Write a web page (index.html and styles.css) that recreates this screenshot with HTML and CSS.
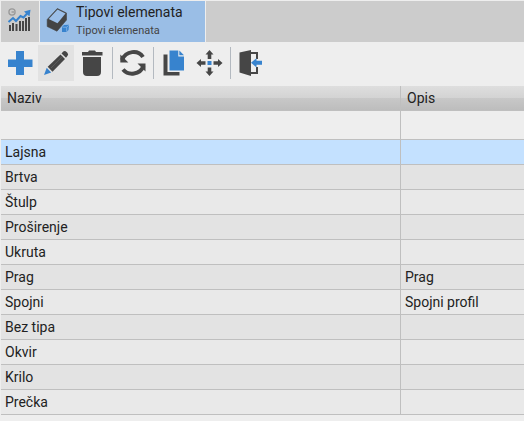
FILE: index.html
```html
<!DOCTYPE html>
<html lang="hr">
<head>
<meta charset="utf-8">
<title>Tipovi elemenata</title>
<link rel="stylesheet" href="styles.css">
</head>
<body>
<main class="window">
  <nav class="tabs">
    <div class="tab tab-home">
      <svg width="38" height="41" viewBox="1 1 38 41">
        <circle cx="12" cy="12" r="3.1" fill="none" stroke="#999" stroke-width="1.3"/>
        <path d="M14 12h-2.500" stroke="#999" stroke-width="1.400"/>
        <path d="M9 25h2v6H9zM12 23h2v8h-2zM15.500 24h2v7h-2zM19 21h2v10h-2zM22 21h2v10h-2zM25 18h2v13h-2zM28 17h2v14h-2z" fill="#464646"/>
        <path d="M8.500 22l4.500-4 3 3 4.500-5 3 1.500 4.500-5" fill="none" stroke="#3783ce" stroke-width="2"/>
        <path d="M24 11.500L30.500 9.700 29.500 16.500z" fill="#3783ce"/>
      </svg>
    </div>
    <div class="tab tab-active">
      <svg width="36" height="41" viewBox="40 1 36 41">
        <path d="M57.300 8.500L66.500 13v7L57 31.200l-9.800-4.700v-7z" fill="#444" stroke="#444" stroke-width=".6" stroke-linejoin="round"/>
        <path d="M57.500 9.500l8 4-8 9.800-8.800-4.300z" fill="#9bbfe9"/>
        <path d="M64 25l5-.3-.5 5.300-2 2H62v-5z" fill="#3783ce"/>
        <path d="M62.500 27.200h4.200v4.500M66.700 27.200l2-2" fill="none" stroke="#8bb6e5" stroke-width=".8"/>
      </svg>
      <div class="tab-text"><div class="title">Tipovi elemenata</div><div class="subtitle">Tipovi elemenata</div></div>
    </div>
    <div class="tab-space"></div>
  </nav>
  <div class="toolbar">
    <div class="tool"><svg width="36" height="36" viewBox="2 45 36 36"><path d="M16 51h8v8.500h8.500v7.500H24V75h-8v-8H8v-7.500h8z" fill="#3783ce"/></svg></div>
    <div class="tool tool-hover"><svg width="36" height="36" viewBox="38 45 36 36"><path d="M60.500 54.500l4.500 4.500L52.500 71.800l-4.800-5z" fill="#464646"/><path d="M61.500 53.500l1.500-1.700q1.700-1.600 3.600.1l.8.900q1.500 1.700 0 3.200L66 57.700z" fill="#464646"/><path d="M46.700 67.800l4.500 4.600L44 75z" fill="#3783ce"/><path d="M51 68l11-11.200" stroke="#666" stroke-width=".7"/></svg></div>
    <div class="tool"><svg width="38" height="36" viewBox="74 45 38 36"><path d="M82 52h6l1-1.500h6l1 1.500h6.500v3.500H82zM83 57h18v15q0 4-4 4H87q-4 0-4-4z" fill="#464646"/></svg></div>
    <div class="separator"></div>
    <div class="tool"><svg width="40" height="36" viewBox="113 45 40 36"><path d="M122 60C126 50.500 138 49.500 143 57" fill="none" stroke="#464646" stroke-width="4"/><path d="M120.300 54.500v8h8z" fill="#464646"/><path d="M143.500 66c-3.500 9-15 10-20.500 3.500" fill="none" stroke="#464646" stroke-width="4"/><path d="M145.500 71.500v-8h-8z" fill="#464646"/></svg></div>
    <div class="separator"></div>
    <div class="tool"><svg width="38" height="36" viewBox="154 45 38 36"><path d="M163.500 54.500h4v17.500h12v3.500h-16z" fill="#464646"/><path d="M169.500 50.500h8.800v6h5.700v14h-14.500z" fill="#3783ce"/><path d="M179.300 50.500l4.700 4.800h-4.700z" fill="#3783ce"/></svg></div>
    <div class="tool"><svg width="38" height="36" viewBox="192 45 38 36"><path d="M209.500 50l4 4.500h-2.200V59h-3.600v-4.500h-2.200zM209.500 76l4-4.500h-2.200v-4h-3.600v4h-2.200zM196.500 63l4.500-4v2.200h4.500v3.600H201V67zM222.500 63l-4.500-4v2.200h-4.500v3.600h4.500V67z" fill="#464646"/><path d="M207.500 61h4v4h-4z" fill="#3783ce"/></svg></div>
    <div class="separator"></div>
    <div class="tool"><svg width="38" height="36" viewBox="231 45 38 36"><path d="M239.500 52.500l11.500-2.500v26l-11.500-3.500z" fill="#464646"/><path d="M251 53h6v6M257 67v6h-6" fill="none" stroke="#464646" stroke-width="2"/><path d="M251 62.700l5.500-4.500v2.500h5.500v4h-5.500v2.800z" fill="#3783ce"/></svg></div>
  </div>
  <div class="grid">
    <div class="row head"><div class="cell">Naziv</div><div class="cell">Opis</div></div>
    <div class="row filter"><div class="cell"></div><div class="cell"></div></div>
    <div class="row selected"><div class="cell">Lajsna</div><div class="cell"></div></div>
    <div class="row odd"><div class="cell">Brtva</div><div class="cell"></div></div>
    <div class="row"><div class="cell">Štulp</div><div class="cell"></div></div>
    <div class="row odd"><div class="cell">Proširenje</div><div class="cell"></div></div>
    <div class="row"><div class="cell">Ukruta</div><div class="cell"></div></div>
    <div class="row odd"><div class="cell">Prag</div><div class="cell">Prag</div></div>
    <div class="row"><div class="cell">Spojni</div><div class="cell">Spojni profil</div></div>
    <div class="row odd"><div class="cell">Bez tipa</div><div class="cell"></div></div>
    <div class="row"><div class="cell">Okvir</div><div class="cell"></div></div>
    <div class="row odd"><div class="cell">Krilo</div><div class="cell"></div></div>
    <div class="row"><div class="cell">Prečka</div><div class="cell"></div></div>
  </div>
</main>
</body>
</html>
```
FILE: styles.css
```css
* { box-sizing: border-box; }
body { margin: 0; background: #eee; color: #222; font: 14px/16px Roboto, sans-serif; overflow: hidden; }
svg { display: block; flex: none; }
.window { width: 524px; height: 421px; padding: 1px 0 0 1px; }
.tabs { display: flex; gap: 1px; height: 41px; }
.tab { display: flex; height: 41px; }
.tab-home { width: 38px; background: #ccc; }
.tab-active { width: 165px; background: #9abee6; }
.tab-space { flex: 1; background: #ccc; }
.tab-text { padding-top: 3px; white-space: nowrap; }
.title { font-size: 14px; line-height: 17px; }
.subtitle { font-size: 11px; line-height: 14px; margin-top: 3px; color: #444; }
.toolbar { display: flex; height: 44px; padding: 3px 0 0 1px; }
.tool { height: 36px; }
.tool-hover { background: #e2e2e2; }
.separator { width: 1px; height: 32px; margin-top: 2px; background: #b3b9c0; }
.row { display: grid; grid-template-columns: 400px 1fr; height: 25px; background: #e9e9e9; border-bottom: 1px solid #bfbfbf; }
.cell { padding: 4px 4px 0; white-space: nowrap; }
.cell:first-child { border-right: 1px solid #bfbfbf; }
.odd { background: #e3e3e3; }
.head { background: linear-gradient(#dedede 0, #d3d3d3 12px, #c8c8c8 12px, #bdbdbd 24px); }
.head .cell { padding-left: 6px; }
.filter { height: 29px; background: #eee; }
.selected { background: #c4e1ff; }
```
